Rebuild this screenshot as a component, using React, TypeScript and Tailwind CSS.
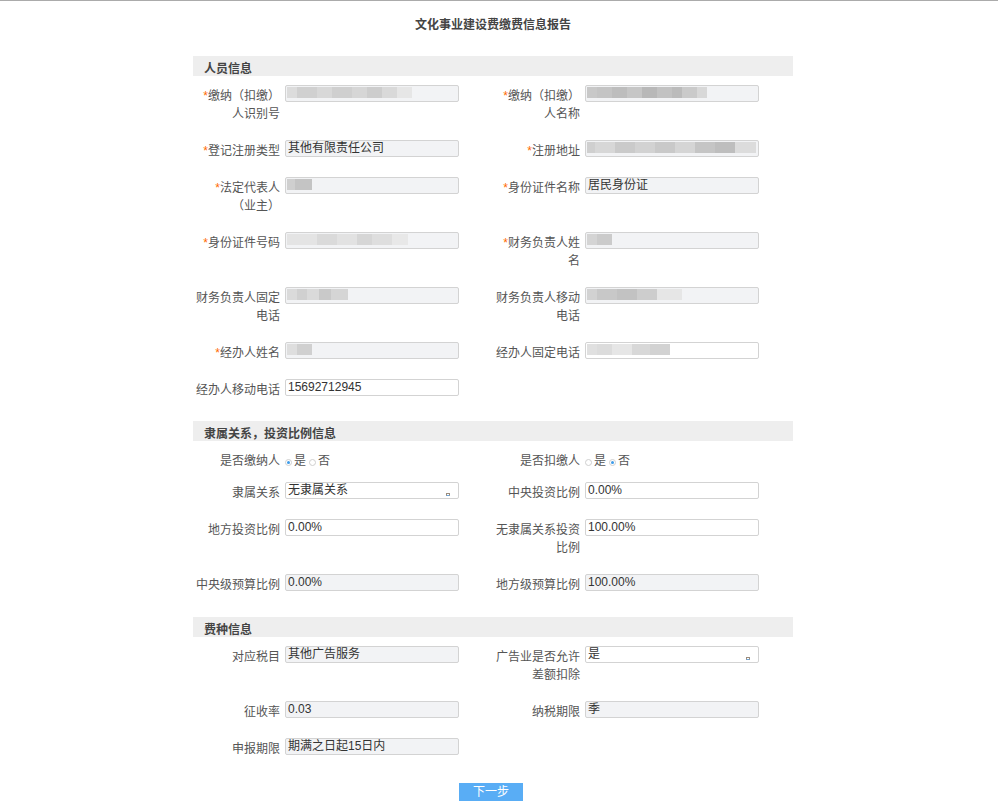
import React from "react";

type Seg = [number, string];

const Blur = ({ segs, white }: { segs: Seg[]; white?: boolean }) => (
  <div className={`relative ml-[5px] h-[17px] w-[174px] shrink-0 rounded-[2px] border border-[#d3d3d3] ${white ? "bg-white" : "bg-[#f2f3f5]"}`}>
    <div className="ml-[1px] mt-[1px] flex h-[11px]">
      {segs.map((s, i) => (
        <div key={i} style={{ width: s[0], background: s[1] }} />
      ))}
    </div>
  </div>
);

const Input = ({ value, white, select }: { value?: string; white?: boolean; select?: boolean }) => (
  <div className={`relative ml-[5px] h-[17px] w-[174px] shrink-0 rounded-[2px] border border-[#d3d3d3] pl-[2px] text-[12px] leading-[14px] text-[#333] ${white ? "bg-white" : "bg-[#f2f3f5]"}`}>
    {value}
    {select && (
      <span className="absolute bottom-[2px] right-[8px] h-[3px] w-[4px] border border-[#9b8c7c] border-b-[#6fa8dc]" />
    )}
  </div>
);

const Label = ({ text, req }: { text: string; req?: boolean }) => (
  <div className="w-[87px] shrink-0 pt-[2px] text-right text-[12px] leading-[18px] text-[#555]">
    {req && <span className="text-[#ff6a00]">*</span>}
    {text}
  </div>
);

const Cell = ({ label, req, children }: { label?: string; req?: boolean; children?: React.ReactNode }) => (
  <div className="flex items-start">
    {label !== undefined && <Label text={label} req={req} />}
    {children}
  </div>
);

const Row = ({ children }: { children: React.ReactNode }) => (
  <div className="mb-[17px] grid grid-cols-2">{children}</div>
);

const Header = ({ title, className = "" }: { title: string; className?: string }) => (
  <div className={`h-[20px] bg-[#eeeeee] pl-[11px] pt-[6px] text-[12px] font-bold leading-[14px] text-[#444] ${className}`}>
    {title}
  </div>
);

const Radio = ({ checked }: { checked?: boolean }) => (
  <span className="mt-[7px] flex h-[7px] w-[7px] shrink-0 items-center justify-center rounded-full border border-[#cfcfcf] bg-white">
    {checked && <span className="h-[3px] w-[3px] rounded-full bg-[#3d9be9]" />}
  </span>
);

const RadioGroup = ({ yes }: { yes: boolean }) => (
  <div className="ml-[5px] flex items-start pt-[2px] text-[12px] leading-[18px] text-[#555]">
    <Radio checked={yes} />
    <span className="ml-[2px]">是</span>
    <span className="ml-[3px] flex">
      <Radio checked={!yes} />
    </span>
    <span className="ml-[2px]">否</span>
  </div>
);

export default function App() {
  return (
    <div className="min-h-[811px] border-t border-[#ababab] bg-white font-['Liberation_Sans','Noto_Sans_CJK_SC',sans-serif]">
      <div className="ml-[193px] flex w-[600px] flex-col">
        <div className="pt-[15px] text-center text-[12px] font-bold leading-[18px] text-[#444]">
          文化事业建设费缴费信息报告
        </div>

        <Header title="人员信息" className="mt-[22px]" />
        <div className="pt-[9px]">
          <Row>
            <Cell label="缴纳（扣缴）人识别号" req>
              <Blur segs={[[10, "#dcdcdc"], [20, "#d0d0d0"], [15, "#d8d8d8"], [20, "#cfcfcf"], [15, "#d6d6d6"], [15, "#cdcdcd"], [15, "#d9d9d9"], [15, "#e6e6e6"]]} />
            </Cell>
            <Cell label="缴纳（扣缴）人名称" req>
              <Blur segs={[[10, "#c8c8c8"], [15, "#c4c4c4"], [15, "#bdbdbd"], [15, "#c6c6c6"], [15, "#b8b8b8"], [15, "#c2c2c2"], [10, "#bbbbbb"], [15, "#cacaca"], [10, "#d8d8d8"]]} />
            </Cell>
          </Row>
          <Row>
            <Cell label="登记注册类型" req>
              <Input value="其他有限责任公司" />
            </Cell>
            <Cell label="注册地址" req>
              <Blur segs={[[8, "#cfcfcf"], [20, "#d7d7d7"], [20, "#cacaca"], [20, "#d2d2d2"], [20, "#c9c9c9"], [20, "#d5d5d5"], [20, "#c5c5c5"], [20, "#bebebe"], [21, "#dcdcdc"]]} />
            </Cell>
          </Row>
          <Row>
            <Cell label="法定代表人（业主）" req>
              <Blur segs={[[8, "#cfcfcf"], [17, "#c4c4c4"]]} />
            </Cell>
            <Cell label="身份证件名称" req>
              <Input value="居民身份证" />
            </Cell>
          </Row>
          <Row>
            <Cell label="身份证件号码" req>
              <Blur segs={[[30, "#e4e4e4"], [20, "#dadada"], [20, "#e2e2e2"], [15, "#d6d6d6"], [20, "#dedede"], [16, "#e8e8e8"]]} />
            </Cell>
            <Cell label="财务负责人姓名" req>
              <Blur segs={[[10, "#d4d4d4"], [15, "#cbcbcb"]]} />
            </Cell>
          </Row>
          <Row>
            <Cell label="财务负责人固定电话">
              <Blur segs={[[10, "#dadada"], [10, "#d0d0d0"], [12, "#dadada"], [12, "#c9c9c9"], [17, "#d5d5d5"]]} />
            </Cell>
            <Cell label="财务负责人移动电话">
              <Blur segs={[[10, "#d2d2d2"], [20, "#c8c8c8"], [20, "#c2c2c2"], [20, "#cdcdcd"], [25, "#e6e6e6"]]} />
            </Cell>
          </Row>
          <Row>
            <Cell label="经办人姓名" req>
              <Blur segs={[[10, "#dedede"], [15, "#d0d0d0"]]} />
            </Cell>
            <Cell label="经办人固定电话">
              <Blur white segs={[[10, "#e0e0e0"], [15, "#dcdcdc"], [20, "#e6e6e6"], [18, "#d8d8d8"], [20, "#d2d2d2"]]} />
            </Cell>
          </Row>
          <Row>
            <Cell label="经办人移动电话">
              <Input value="15692712945" white />
            </Cell>
            <div />
          </Row>
        </div>

        <Header title="隶属关系，投资比例信息" className="mt-[5px]" />
        <div className="pt-[9px]">
          <div className="mb-[12px] grid grid-cols-2">
            <Cell label="是否缴纳人">
              <RadioGroup yes />
            </Cell>
            <Cell label="是否扣缴人">
              <RadioGroup yes={false} />
            </Cell>
          </div>
          <Row>
            <Cell label="隶属关系">
              <Input value="无隶属关系" white select />
            </Cell>
            <Cell label="中央投资比例">
              <Input value="0.00%" white />
            </Cell>
          </Row>
          <Row>
            <Cell label="地方投资比例">
              <Input value="0.00%" white />
            </Cell>
            <Cell label="无隶属关系投资比例">
              <Input value="100.00%" white />
            </Cell>
          </Row>
          <Row>
            <Cell label="中央级预算比例">
              <Input value="0.00%" />
            </Cell>
            <Cell label="地方级预算比例">
              <Input value="100.00%" />
            </Cell>
          </Row>
        </div>

        <Header title="费种信息" className="mt-[6px]" />
        <div className="pt-[9px]">
          <Row>
            <Cell label="对应税目">
              <Input value="其他广告服务" />
            </Cell>
            <Cell label="广告业是否允许差额扣除">
              <Input value="是" white select />
            </Cell>
          </Row>
          <Row>
            <Cell label="征收率">
              <Input value="0.03" />
            </Cell>
            <Cell label="纳税期限">
              <Input value="季" />
            </Cell>
          </Row>
          <Row>
            <Cell label="申报期限">
              <Input value="期满之日起15日内" />
            </Cell>
            <div />
          </Row>
        </div>

        <div className="ml-[266px] mt-[8px] flex h-[18px] w-[64px] items-center justify-center bg-[#59adf5] text-[12px] leading-[18px] text-white">
          下一步
        </div>
      </div>
    </div>
  );
}
